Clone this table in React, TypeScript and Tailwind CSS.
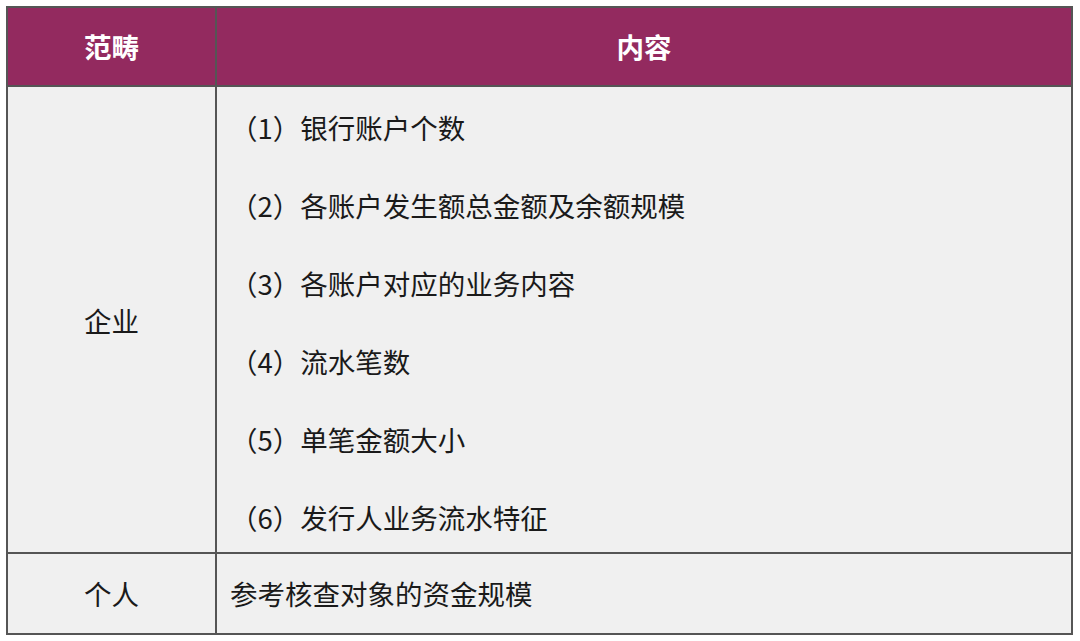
import React from 'react';

const items = [
  '（1）银行账户个数',
  '（2）各账户发生额总金额及余额规模',
  '（3）各账户对应的业务内容',
  '（4）流水笔数',
  '（5）单笔金额大小',
  '（6）发行人业务流水特征',
];

const App: React.FC = () => {
  return (
    <div
      className="w-[1080px] h-[641px] bg-white pt-[6px] pl-[6px] text-[#1a1a1a]"
      style={{ fontFamily: '"Noto Sans CJK SC", "Noto Sans", sans-serif' }}
    >
      <div className="w-[1067px] grid grid-cols-[209px_856px] border-l-2 border-t-2 border-[#555]">
        {/* Header */}
        <div className="h-[79px] bg-[#932a5f] border-r-2 border-b-2 border-[#555] flex items-center justify-center text-white text-[27.5px] font-bold">
          范畴
        </div>
        <div className="h-[79px] bg-[#932a5f] border-r-2 border-b-2 border-[#555] flex items-center justify-center text-white text-[27.5px] font-bold">
          内容
        </div>

        {/* 企业 */}
        <div className="h-[467px] bg-[#f0f0f0] border-r-2 border-b-2 border-[#555] flex items-center justify-center text-[27.5px] pt-[3px]">
          企业
        </div>
        <div className="h-[467px] bg-[#f0f0f0] border-r-2 border-b-2 border-[#555] flex flex-col gap-[38px] pl-[13px] pt-[21px]">
          {items.map((t) => (
            <div key={t} className="h-[40px] flex items-center text-[27.5px] leading-none">
              {t}
            </div>
          ))}
        </div>

        {/* 个人 */}
        <div className="h-[81px] bg-[#f0f0f0] border-r-2 border-b-2 border-[#555] flex items-center justify-center text-[27.5px]">
          个人
        </div>
        <div className="h-[81px] bg-[#f0f0f0] border-r-2 border-b-2 border-[#555] flex items-center pl-[13px] text-[27.5px]">
          参考核查对象的资金规模
        </div>
      </div>
    </div>
  );
};

export default App;
